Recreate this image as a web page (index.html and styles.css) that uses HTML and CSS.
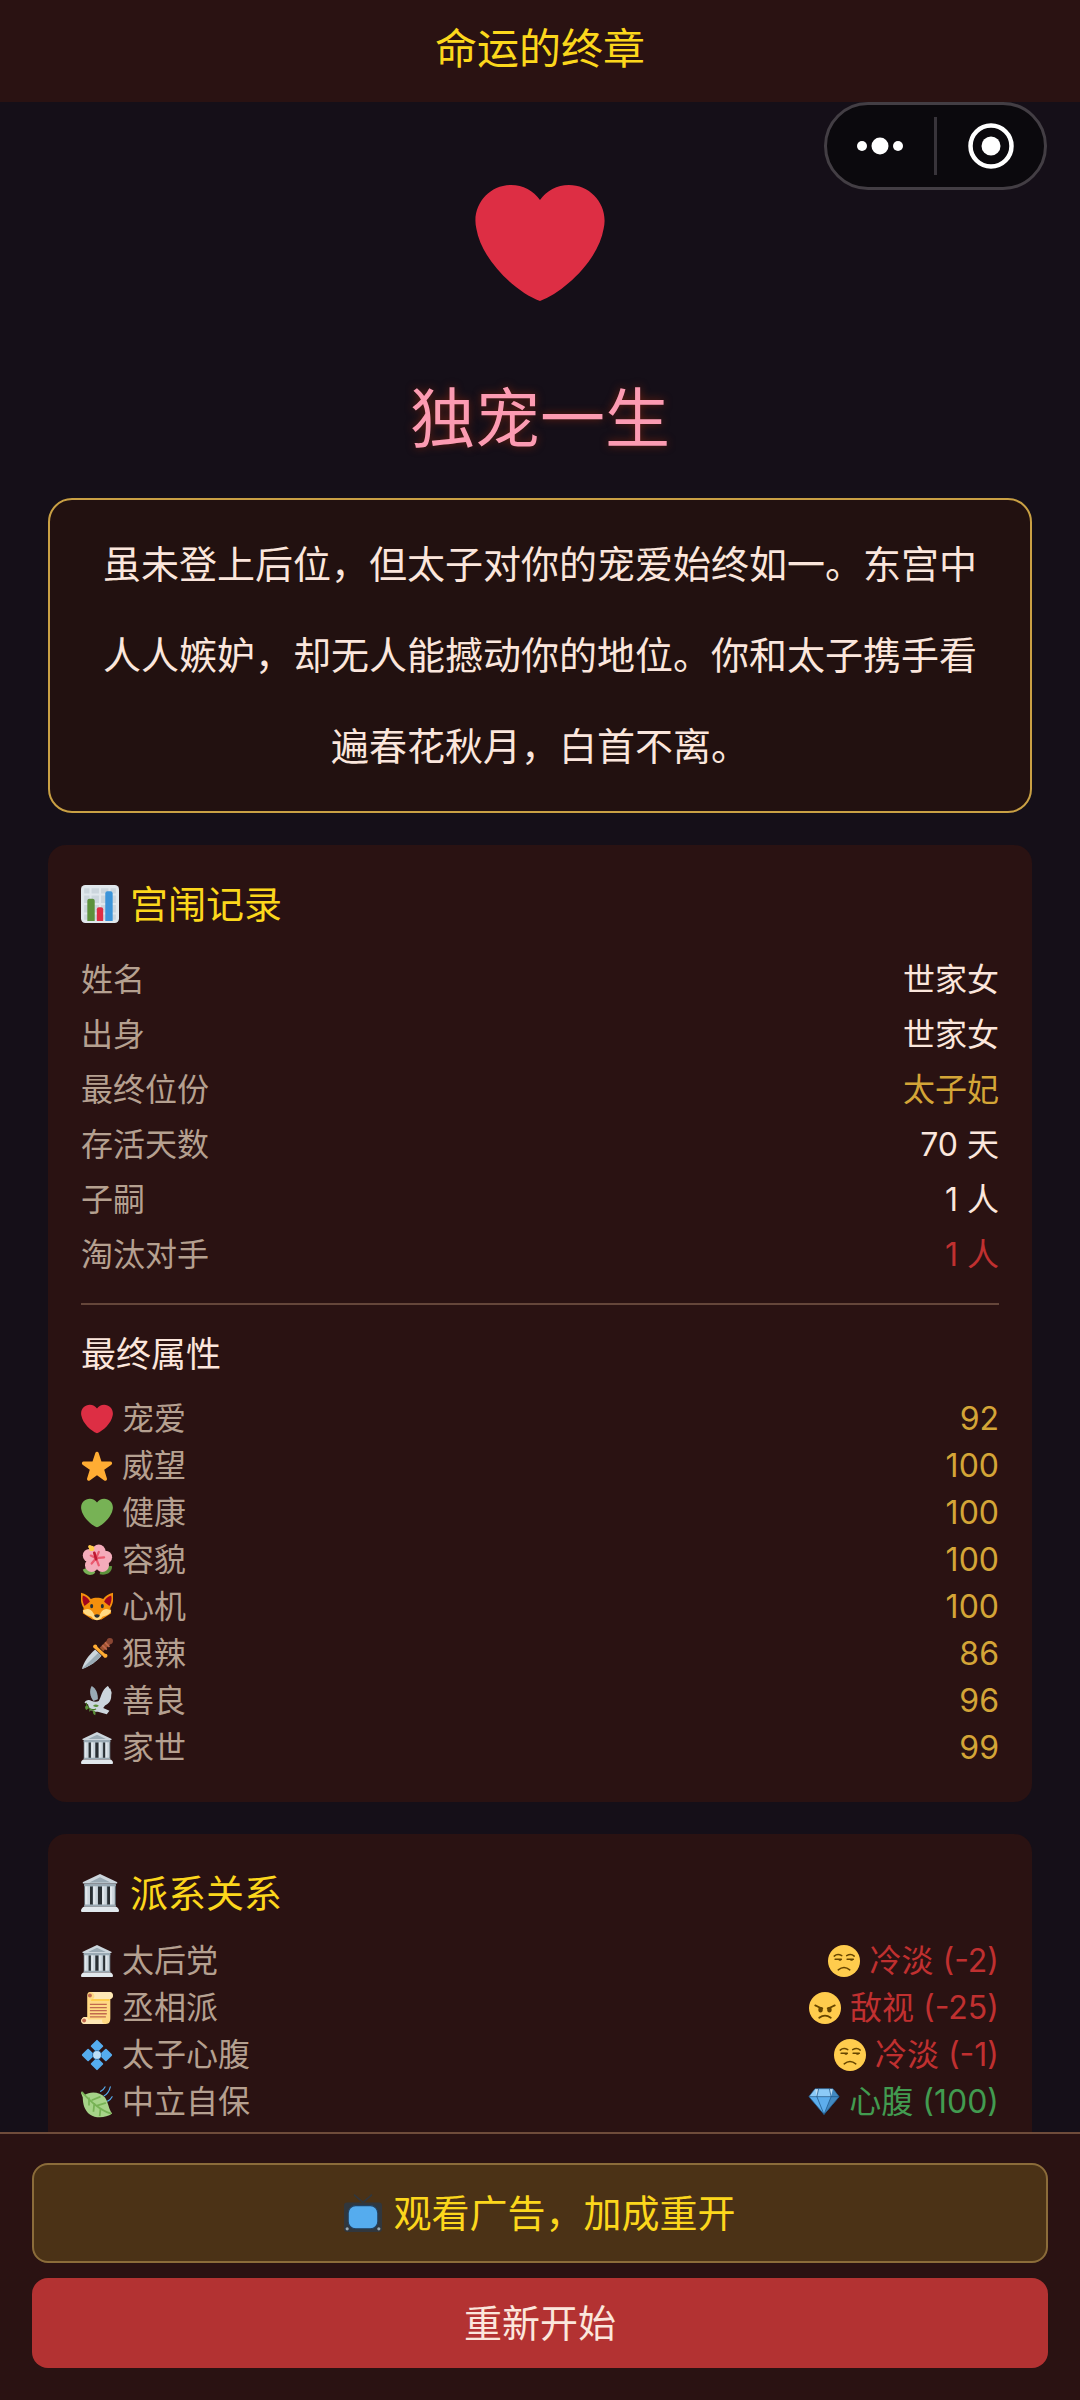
FILE: index.html
```html
<!DOCTYPE html>
<html lang="zh-CN">
<head>
  <meta charset="UTF-8">
  <meta name="viewport" content="width=device-width, initial-scale=1.0">
  <title>命运的终章</title>
  <link rel="stylesheet" href="styles.css">
</head>
<body>
  <!-- shared icons -->
  <svg class="sprite" aria-hidden="true">
    <symbol id="heart" viewBox="0 0 36 36">
      <path fill="currentColor" d="M35.885 11.833c0-5.45-4.418-9.868-9.867-9.868-3.308 0-6.227 1.633-8.018 4.129-1.791-2.496-4.71-4.129-8.017-4.129-5.45 0-9.868 4.417-9.868 9.868 0 .772.098 1.52.266 2.241C1.751 22.587 11.216 31.568 18 34.034c6.783-2.466 16.249-11.447 17.617-19.959.17-.721.268-1.469.268-2.242z"/>
    </symbol>
    <symbol id="palace" viewBox="0 0 36 36">
      <path fill="#66757F" d="M3 10h30v19H3z"/>
      <path fill="#292F33" d="M8 12h3v17H8zM16 12h4v17h-4zM25 12h3v17h-3z"/>
      <path fill="#CCD6DD" d="M4 11h4.500v19H4zM11.500 11H16v19h-4.500zM20 11h4.500v19H20zM27.500 11H32v19h-4.500z"/>
      <path fill="#E1E8ED" d="M4 11h2v19H4zM11.500 11h2v19h-2zM20 11h2v19h-2zM27.500 11h2v19h-2z"/>
      <path fill="#CCD6DD" d="M18 0 34 7.500c.7.400.5 1.500-.5 1.500h-31c-1 0-1.200-1.100-.5-1.500z"/>
      <path fill="#9AAAB4" d="M18 3 28 8H8zM3 9h30v2.500H3zM3 29h30v2H3z"/>
      <path fill="#E1E8ED" d="M3 31h30c1 0 3 2 3 3.500 0 1-.5 1.500-1.500 1.500h-33C.5 36 0 35.500 0 34.500 0 33 2 31 3 31z"/>
    </symbol>
    <symbol id="unamused" viewBox="0 0 36 36">
      <circle cx="18" cy="18" r="18" fill="#FFCC4D"/>
      <g fill="none" stroke="#664500" stroke-width="1.700" stroke-linecap="round">
        <path d="M7 12.500c2.500-2.200 5.500-2.200 8.500-.5M21 12c3-1.700 6-1.700 8.500.5M8 16h7M21.500 16h7M11.500 28c4-3.200 9-3.200 13 0"/>
      </g>
      <path fill="#664500" d="M11.500 16h3.800c0 2.400-3.400 2.400-3.800 0zM24.500 16h3.800c0 2.400-3.400 2.400-3.800 0z"/>
    </symbol>
  </svg>

  <header class="navbar">
    <h1>命运的终章</h1>
  </header>

  <div class="capsule">
    <button type="button" aria-label="更多">
      <svg width="48" height="20" viewBox="0 0 48 20"><circle cx="5" cy="10" r="5"/><circle cx="23" cy="10" r="8.500"/><circle cx="41" cy="10" r="5"/></svg>
    </button>
    <button type="button" aria-label="关闭">
      <svg width="48" height="48" viewBox="0 0 48 48"><circle cx="24" cy="24" r="20.500" fill="none" stroke="#fff" stroke-width="4.500"/><circle cx="24" cy="24" r="9.500"/></svg>
    </button>
  </div>

  <main class="content">
    <svg class="hero-icon red-heart"><use href="#heart"/></svg>
    <h2 class="ending-title">独宠一生</h2>
    <p class="ending-text">虽未登上后位，但太子对你的宠爱始终如一。东宫中人人嫉妒，却无人能撼动你的地位。你和太子携手看遍春花秋月，白首不离。</p>

    <section class="card">
      <h3 class="card-title">
        <svg class="icon" viewBox="0 0 36 36">
          <rect width="36" height="36" rx="4" fill="#E1E8ED"/>
          <path fill="#CCD6DD" d="M3 3h5v5H3zM10 3h7v5h-7zM19 3h7v5h-7zM28 3h5v5h-5zM3 10h5v7H3zM10 10h7v7h-7zM19 10h7v7h-7zM28 10h5v7h-5zM3 19h5v7H3zM10 19h7v7h-7zM19 19h7v7h-7zM28 19h5v7h-5zM3 28h5v5H3zM10 28h7v5h-7zM19 28h7v5h-7zM28 28h5v5h-5z"/>
          <path fill="#5C913B" d="M6 34V15q0-2 2-2h3q2 0 2 2v19z"/>
          <path fill="#DD2E44" d="M15 34V23q0-2 2-2h2q2 0 2 2v11z"/>
          <path fill="#3B94D9" d="M23 34V8q0-2 2-2h3q2 0 2 2v26z"/>
        </svg>
        宫闱记录
      </h3>
      <dl class="records">
        <div class="row"><dt>姓名</dt><dd>世家女</dd></div>
        <div class="row"><dt>出身</dt><dd>世家女</dd></div>
        <div class="row"><dt>最终位份</dt><dd class="gold">太子妃</dd></div>
        <div class="row"><dt>存活天数</dt><dd>70 天</dd></div>
        <div class="row"><dt>子嗣</dt><dd>1 人</dd></div>
        <div class="row"><dt>淘汰对手</dt><dd class="red">1 人</dd></div>
      </dl>
      <h4 class="sub-title">最终属性</h4>
      <dl class="stats">
        <div class="row"><dt><svg class="icon red-heart"><use href="#heart"/></svg>宠爱</dt><dd class="gold">92</dd></div>
        <div class="row">
          <dt><svg class="icon" viewBox="0 0 36 36"><path fill="#FFAC33" d="M27.287 34.627c-.404 0-.806-.124-1.152-.371L18 28.422l-8.135 5.834a1.970 1.970 0 0 1-2.312-.008 1.971 1.971 0 0 1-.721-2.194l3.034-9.792-8.062-5.681a1.980 1.980 0 0 1-.708-2.203 1.978 1.978 0 0 1 1.866-1.363L12.947 13l3.179-9.549a1.976 1.976 0 0 1 3.749 0L23 13l10.036.015a1.975 1.975 0 0 1 1.159 3.566l-8.062 5.681 3.034 9.792a1.970 1.970 0 0 1-.72 2.194 1.957 1.957 0 0 1-1.160.379z"/></svg>威望</dt>
          <dd class="gold">100</dd>
        </div>
        <div class="row"><dt><svg class="icon green-heart"><use href="#heart"/></svg>健康</dt><dd class="gold">100</dd></div>
        <div class="row">
          <dt>
            <svg class="icon" viewBox="0 0 36 36">
              <path fill="#77B255" d="M2 29c4-3 11-3 14 3-4 5-12 3-14-3z"/>
              <path fill="#5C913B" d="M35 25c-7-1-13 2-14 9 7 2 14-2 14-9z"/>
              <g fill="#F4ABBA"><circle cx="20" cy="8" r="7.500"/><circle cx="27.500" cy="15" r="7.500"/><circle cx="24" cy="24" r="7.500"/><circle cx="12" cy="24" r="7.500"/><circle cx="9.500" cy="13" r="7.500"/><circle cx="18" cy="17" r="8"/></g>
              <path fill="none" stroke="#EA596E" stroke-width="2.500" stroke-linecap="round" d="M17 16l3 8M17 16l9-1M17 16l-5 6M17 16l-6-3M17 16l3-7"/>
              <path fill="none" stroke="#BE1931" stroke-width="3" stroke-linecap="round" d="M15 10l2 7"/>
              <circle cx="12" cy="5" r="3" fill="#FFCC4D"/><circle cx="10" cy="3" r="2" fill="#FFCC4D"/>
            </svg>容貌</dt>
          <dd class="gold">100</dd>
        </div>
        <div class="row">
          <dt>
            <svg class="icon" viewBox="0 0 36 36">
              <path fill="#F4900C" d="M0 2c5 1 9 4 11 7 4-2 10-2 14 0 2-3 6-6 11-7 1 6 0 13-3 17l1 6-11 7H13L2 25l1-6C0 15-1 8 0 2z"/>
              <path fill="#A0041E" d="M2 5c4 1 7 4 8 7l-6 5C2 13 1 9 2 5zM34 5c-4 1-7 4-8 7l6 5c2-4 3-8 2-12z"/>
              <path fill="#FFD983" d="M2 22c5-3 9-2 12 3l2 4h4l2-4c3-5 7-6 12-3-1 4-5 6-10 7-2 3-4 4-6 4s-4-1-6-4C7 28 3 26 2 22z"/>
              <ellipse cx="12" cy="17" rx="1.700" ry="2.500" fill="#292F33"/><ellipse cx="24" cy="17" rx="1.700" ry="2.500" fill="#292F33"/>
              <path fill="#292F33" d="M15 27c2-1.300 4-1.300 6 0 0 2-1.500 3-3 3s-3-1-3-3z"/>
            </svg>心机</dt>
          <dd class="gold">100</dd>
        </div>
        <div class="row">
          <dt>
            <svg class="icon" viewBox="0 0 36 36">
              <path stroke="#A0522D" stroke-width="5.500" d="M23 13l9-9"/>
              <path stroke="#C1694F" stroke-width="2" d="M24 8l5 5M27 5l5 5"/>
              <circle cx="32.500" cy="3.500" r="3.500" fill="#8A4633"/>
              <path fill="#CCD6DD" d="M16 13l7 7C18 26 10 32 1 35 3 27 8 20 16 13z"/>
              <path fill="#9AAAB4" d="M19.500 16.500L23 20C18 26 10 32 1 35z"/>
              <path stroke="#FFAC33" stroke-width="3.500" stroke-linecap="round" d="M16 10l11 10"/>
              <circle cx="16" cy="9.500" r="2.300" fill="#FFAC33"/><circle cx="27.500" cy="20" r="2.300" fill="#FFAC33"/>
            </svg>狠辣</dt>
          <dd class="gold">86</dd>
        </div>
        <div class="row">
          <dt>
            <svg class="icon" viewBox="0 0 36 36">
              <path fill="#99AAB5" d="M12 1c5 3 7 8 7 15l-5 2C10 13 9 6 12 1z"/>
              <path fill="#CCD6DD" d="M20 18c3-5 3-12 10-17 2 1 1 2 2 3 2 0 1 2 2 3 1 2 0 3 0 5 0 6-3 9-7 11l-2 3 7 3-3 4-10-3c-5 1-10-2-11-8l-4-2c1-3 5-4 8-2 3 1 6 1 8 0z"/>
              <path fill="none" stroke="#3E721D" stroke-width="1.200" d="M6 20c0 6 5 9 11 7M13 28l2 5"/>
              <path fill="#5C913B" d="M7 23c-3 0-3 3-1 5 3-1 3-4 1-5zM14 24c-1-2 3-3 6-1-1 2-4 2-6 1zM14 28c-1 3 0 5 2 6 1-3 0-5-2-6zM10 26l-1 4 3-2z"/>
            </svg>善良</dt>
          <dd class="gold">96</dd>
        </div>
        <div class="row"><dt><svg class="icon"><use href="#palace"/></svg>家世</dt><dd class="gold">99</dd></div>
      </dl>
    </section>

    <section class="card">
      <h3 class="card-title">
        <svg class="icon"><use href="#palace"/></svg>
        派系关系
      </h3>
      <dl class="stats">
        <div class="row">
          <dt><svg class="icon"><use href="#palace"/></svg>太后党</dt>
          <dd class="red"><svg class="icon"><use href="#unamused"/></svg>冷淡 (-2)</dd>
        </div>
        <div class="row">
          <dt>
            <svg class="icon" viewBox="0 0 36 36">
              <path fill="#FFD983" d="M10 0h22c5 0 5 7 1 8v21c0 4-1 7-5 7H4c-5 0-5-7 0-8h3V4c0-2 1-4 3-4z"/>
              <path fill="#FFE8B6" d="M10 0h22c5 0 5 7 1 8H13c4-2 2-8-3-8zM4 28c-5 1-5 8 0 8h24c-4 0-5-3-4-5H8c0-2-2-3-4-3z"/>
              <path fill="#FFCC4D" d="M12 8h20v2H11z"/>
              <circle cx="10" cy="4" r="2.200" fill="#C1694F"/><circle cx="3.500" cy="32" r="2.200" fill="#C1694F"/>
              <path stroke="#C1694F" stroke-width="1.500" d="M10 14h19M10 17.500h19M10 21h19M10 24.500h19M10 28h18"/>
            </svg>丞相派</dt>
          <dd class="red">
            <svg class="icon" viewBox="0 0 36 36">
              <circle cx="18" cy="18" r="18" fill="#FFCC4D"/>
              <path fill="none" stroke="#664500" stroke-width="2" stroke-linecap="round" d="M7 15c2 1 5 3 8 3.500M29 15c-2 1-5 3-8 3.500M11.500 29c4-3 9-3 13 0"/>
              <ellipse cx="13" cy="20" rx="2.500" ry="3" fill="#664500"/><ellipse cx="23" cy="20" rx="2.500" ry="3" fill="#664500"/>
            </svg>敌视 (-25)</dd>
        </div>
        <div class="row">
          <dt>
            <svg class="icon" viewBox="0 0 36 36">
              <path fill="#55ACEE" stroke="#55ACEE" stroke-width="2" stroke-linejoin="round" d="M18 2l6 6-6 6-6-6zM18 22l6 6-6 6-6-6zM8 12l6 6-6 6-6-6zM28 12l6 6-6 6-6-6z"/>
              <circle cx="18" cy="18" r="5" fill="#BBDDF5" stroke="#2468A0"/>
            </svg>太子心腹</dt>
          <dd class="red"><svg class="icon"><use href="#unamused"/></svg>冷淡 (-1)</dd>
        </div>
        <div class="row">
          <dt>
            <svg class="icon" viewBox="0 0 36 36">
              <path fill="#A6D388" d="M1 6l3 4c6-4 17-4 23 3 4 6 4 13 8 18-7 5-18 6-25 1-6-4-8-12-8-19L0 8z"/>
              <path fill="none" stroke="#77B255" stroke-width="2" d="M1 7c8 8 19 20 33 24M9 13l0 9M15 19l-1 10M22 25l-1 9M12 16l10-4M18 22l10-3"/>
              <path fill="none" stroke="#55ACEE" stroke-width="1.300" stroke-linecap="round" d="M22 6c3-1 4-3 5-5M26 11c4-2 6-6 7-10M30 17c2-1 4-3 5-5"/>
            </svg>中立自保</dt>
          <dd class="green">
            <svg class="icon" viewBox="0 0 36 36">
              <path fill="#BDDDF4" d="M8 3h20l7 9H1z"/>
              <path fill="#5DADEC" d="M1 12h34L18 32z"/>
              <path fill="#8CCAF7" d="M1 12h9L8 3zM10 12h16l-2-9H12z"/>
              <path fill="#4289C1" d="M26 12h9L18 32zM28 3l7 9h-9z"/>
              <path fill="none" stroke="#1B5586" stroke-width=".8" d="M8 3h20l7 9-17 20L1 12zM1 12h34M12 3l-2 9 8 20 8-20-2-9"/>
            </svg>心腹 (100)</dd>
        </div>
      </dl>
    </section>
  </main>

  <footer class="actions">
    <button type="button" class="btn btn-ad">
      <svg class="icon" viewBox="0 0 36 36">
        <path fill="none" stroke="#31373D" stroke-width="1.500" stroke-linecap="round" d="M10 1l8 7 8-7"/>
        <rect y="8" width="36" height="28" rx="3" fill="#31373D"/>
        <rect x="4" y="11" width="28" height="22" rx="7" fill="#55ACEE" stroke="#22405F"/>
        <circle cx="3" cy="33" r="1.500" fill="#99AAB5"/><circle cx="33" cy="33" r="1.500" fill="#99AAB5"/>
      </svg>观看广告，加成重开
    </button>
    <button type="button" class="btn btn-restart">重新开始</button>
  </footer>
</body>
</html>
```
FILE: styles.css
```css
* {
  margin: 0;
  padding: 0;
  box-sizing: border-box;
}

body {
  display: flex;
  flex-direction: column;
  height: 100vh;
  background: #150f18;
  color: #fbe6dc;
  font-family: Inter, "Noto Sans CJK SC", sans-serif;
  font-size: 32px;
  font-weight: 400;
}

h1, h2, h3, h4 {
  font-weight: 400;
}

button {
  border: none;
  background: none;
  color: inherit;
  font-family: inherit;
  cursor: pointer;
}

.sprite {
  display: none;
}

.navbar {
  flex: none;
  background: #2a1212;
  color: #fcd71c;
  text-align: center;
  padding-bottom: 4px;
}

.navbar h1 {
  font-size: 42px;
  line-height: 98px;
}

/* floating menu capsule */
.capsule {
  position: absolute;
  top: 102px;
  right: 33px;
  display: flex;
  width: 223px;
  height: 88px;
  padding: 12px 0;
  background: #0b090d;
  border: 3px solid #433e44;
  border-radius: 44px;
}

.capsule button {
  flex: 1;
  display: flex;
  justify-content: center;
  align-items: center;
  fill: #fff;
}

.capsule button + button {
  border-left: 3px solid #38343a;
}

.content {
  flex: 1;
  min-height: 0;
  overflow-y: auto;
  scrollbar-width: none;
  padding: 76px 48px 32px;
}

.icon {
  flex: none;
  width: 1em;
  height: 1em;
}

.red-heart { color: #dd2e44; }
.green-heart { color: #77b255; }

.hero-icon {
  display: block;
  width: 130px;
  height: 130px;
  margin: 0 auto 63px;
}

.ending-title {
  font-size: 65px;
  line-height: 96px;
  text-align: center;
  color: #fc9bb2;
  text-shadow: 0 0 8px #6a2010;
  margin-bottom: 31px;
}

.ending-text {
  padding: 19px 42px;
  background: #221110;
  border: 2px solid #c9a044;
  border-radius: 24px;
  font-size: 38px;
  line-height: 91px;
  text-align: center;
}

.card {
  margin-top: 32px;
  padding: 31px 33px;
  background: #2a1212;
  border-radius: 18px;
}

.card-title {
  display: flex;
  align-items: center;
  gap: 11px;
  font-size: 38px;
  line-height: 56px;
  color: #fcd71c;
  margin-bottom: 16px;
}

.row {
  display: flex;
  justify-content: space-between;
  line-height: 47px;
}

.row dt,
.row dd {
  display: flex;
  align-items: center;
  gap: 9px;
}

.row dt {
  color: #b5a090;
}

.records {
  padding: 4px 0 21px;
  border-bottom: 2px solid #65463a;
}

.records .row {
  line-height: 55px;
}

.sub-title {
  margin: 24px 0 16px;
  font-size: 35px;
  line-height: 50px;
}

.row .gold { color: #d4a537; }
.row .red { color: #c03030; }
.row .green { color: #429b50; }

.actions {
  flex: none;
  display: flex;
  flex-direction: column;
  gap: 15px;
  padding: 29px 32px 32px;
  background: #2a1212;
  border-top: 2px solid #6f4c3a;
}

.btn {
  display: flex;
  justify-content: center;
  align-items: center;
  gap: 11px;
  border-radius: 16px;
  font-size: 38px;
  line-height: 56px;
}

.btn-ad {
  padding: 20px;
  background: #4b3216;
  border: 2px solid #8b6c3a;
  color: #fcd71c;
}

.btn-restart {
  padding: 17px;
  background: #b33232;
  color: #fbe6dc;
}
```
